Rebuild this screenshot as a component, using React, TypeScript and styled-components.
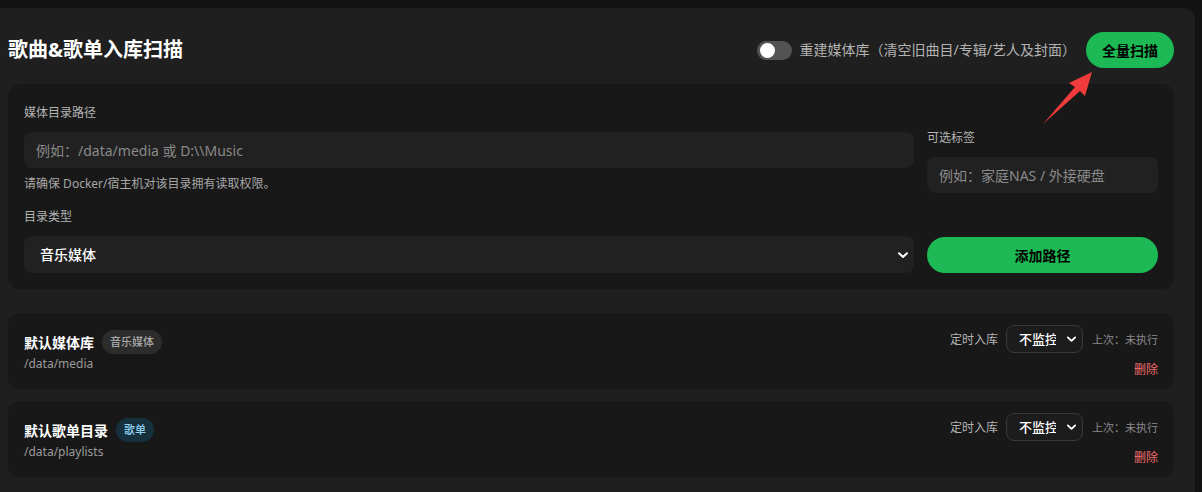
import React from "react";
import styled, { createGlobalStyle } from "styled-components";

const GlobalStyle = createGlobalStyle`
  html, body {
    margin: 0;
    padding: 0;
    background: #121212;
    overflow: hidden;
    color-scheme: dark;
  }
  body {
    font-family: "Noto Sans", "Noto Sans CJK SC", sans-serif;
    color: #fff;
  }
`;

const Panel = styled.section`
  position: relative;
  margin-top: 8px;
  width: 1195px;
  box-sizing: border-box;
  padding: 24px 21px 24px 8px;
  background: #1f1f1f;
  border-top-right-radius: 12px;
`;

const Header = styled.header`
  display: flex;
  align-items: center;
  height: 36px;
`;

const Title = styled.h2`
  margin: 0;
  flex: 1;
  font-size: 20px;
  font-weight: 700;
  line-height: 28px;
  color: #fff;
`;

const ToggleWrap = styled.label`
  display: flex;
  align-items: center;
  gap: 8px;
  margin-right: 10px;
  font-size: 14px;
  color: #b3b3b3;
  line-height: 20px;
`;

const Track = styled.span<{ $on?: boolean }>`
  position: relative;
  width: 35px;
  height: 19px;
  border-radius: 10px;
  background: ${(p) => (p.$on ? "#1db954" : "#535353")};
`;

const Knob = styled.span`
  position: absolute;
  top: 2px;
  left: 3px;
  width: 15px;
  height: 15px;
  border-radius: 50%;
  background: #fff;
`;

const GreenButton = styled.button<{ $wide?: boolean }>`
  height: 36px;
  padding: 0 16px;
  width: ${(p) => (p.$wide ? "100%" : "auto")};
  border: none;
  border-radius: 999px;
  background: #1db954;
  color: #000;
  font-family: inherit;
  font-size: 14px;
  font-weight: 700;
  cursor: pointer;
`;

const FormCard = styled.div`
  margin-top: 16px;
  padding: 20px 16px 16px;
  background: #181818;
  border-radius: 12px;
  display: grid;
  grid-template-columns: 1fr 231px;
  column-gap: 13px;
  row-gap: 15px;
  align-items: end;
`;

const Field = styled.div`
  display: flex;
  flex-direction: column;
`;

const Label = styled.div`
  font-size: 12px;
  line-height: 18px;
  color: #b3b3b3;
  margin-bottom: 10px;
`;

const Input = styled.input`
  height: 36px;
  box-sizing: border-box;
  padding: 0 12px;
  border: none;
  border-radius: 8px;
  background: #212121;
  color: #fff;
  font-family: inherit;
  font-size: 14px;
  outline: none;
  &::placeholder {
    color: #8a8a8a;
  }
`;

const Hint = styled.div`
  margin-top: 7px;
  font-size: 12px;
  line-height: 18px;
  color: #a7a7a7;
`;

const SelectWrap = styled.div`
  position: relative;
  display: flex;
`;

const Select = styled.select<{ $small?: boolean }>`
  appearance: none;
  flex: 1;
  height: ${(p) => (p.$small ? "28px" : "37px")};
  box-sizing: border-box;
  padding: ${(p) => (p.$small ? "0 26px 0 12px" : "0 30px 0 16px")};
  border: ${(p) => (p.$small ? "1px solid #3a3a3a" : "none")};
  border-radius: 8px;
  background: ${(p) => (p.$small ? "#1c1c1c" : "#212121")};
  color: #fff;
  font-family: inherit;
  font-size: ${(p) => (p.$small ? "13px" : "14px")};
  font-weight: 500;
  outline: none;
`;

const Chevron = styled.svg<{ $right: number }>`
  position: absolute;
  right: ${(p) => p.$right}px;
  top: 50%;
  transform: translateY(-50%);
  pointer-events: none;
`;

const List = styled.div`
  margin-top: 24px;
  display: flex;
  flex-direction: column;
  gap: 12px;
`;

const LibCard = styled.div`
  display: flex;
  align-items: center;
  justify-content: space-between;
  padding: 12px 16px;
  height: 76px;
  box-sizing: border-box;
  background: #181818;
  border-radius: 12px;
`;

const LibInfo = styled.div`
  display: flex;
  flex-direction: column;
  gap: 2px;
`;

const NameRow = styled.div`
  display: flex;
  align-items: center;
  gap: 8px;
`;

const Name = styled.span`
  font-size: 14px;
  font-weight: 700;
  color: #fff;
`;

const Badge = styled.span<{ $kind: "media" | "playlist" }>`
  padding: 4px 8px;
  border-radius: 999px;
  font-size: 11px;
  line-height: 16px;
  font-weight: 500;
  background: ${(p) => (p.$kind === "playlist" ? "#17303d" : "#2c2c2c")};
  color: ${(p) => (p.$kind === "playlist" ? "#8fd3f0" : "#a8a8a8")};
`;

const Path = styled.span`
  font-size: 12px;
  line-height: 16px;
  color: #9a9a9a;
`;

const LibActions = styled.div`
  display: flex;
  flex-direction: column;
  align-items: flex-end;
  gap: 9px;
`;

const ScheduleRow = styled.div`
  display: flex;
  align-items: center;
  gap: 8px;
`;

const SmallLabel = styled.span`
  font-size: 12px;
  color: #b3b3b3;
`;

const LastRun = styled.span`
  margin-left: 1px;
  font-size: 11px;
  color: #8a8a8a;
`;

const DeleteLink = styled.button`
  border: none;
  background: none;
  padding: 0;
  font-family: inherit;
  font-size: 12px;
  line-height: 16px;
  color: #f26b6b;
  cursor: pointer;
`;

const Arrow = styled.svg`
  position: absolute;
  left: 1040px;
  top: 62px;
`;

const ChevronIcon: React.FC<{ right: number; size: number }> = ({ right, size }) => (
  <Chevron $right={right} width={size} height={size} viewBox="0 0 12 12">
    <path d="M2 4.2 6 8 10 4.2" fill="none" stroke="#fff" strokeWidth="2" strokeLinecap="round" strokeLinejoin="round" />
  </Chevron>
);

const libraries = [
  { name: "默认媒体库", badge: "音乐媒体", kind: "media" as const, path: "/data/media" },
  { name: "默认歌单目录", badge: "歌单", kind: "playlist" as const, path: "/data/playlists" },
];

const App: React.FC = () => {
  return (
    <>
      <GlobalStyle />
      <Panel>
        <Header>
          <Title>歌曲&amp;歌单入库扫描</Title>
          <ToggleWrap>
            <Track>
              <Knob />
            </Track>
            重建媒体库（清空旧曲目/专辑/艺人及封面）
          </ToggleWrap>
          <GreenButton>全量扫描</GreenButton>
        </Header>

        <Arrow width="56" height="66" viewBox="1040 70 56 66">
          <polygon
            points="1092,72 1069,83 1075,87 1043,124 1080,91 1085,96"
            fill="#f23b3b"
          />
        </Arrow>

        <FormCard>
          <Field>
            <Label>媒体目录路径</Label>
            <Input placeholder="例如：/data/media 或 D:\\Music" />
            <Hint>请确保 Docker/宿主机对该目录拥有读取权限。</Hint>
          </Field>
          <Field>
            <Label>可选标签</Label>
            <Input placeholder="例如：家庭NAS / 外接硬盘" />
          </Field>
          <Field>
            <Label>目录类型</Label>
            <SelectWrap>
              <Select defaultValue="music">
                <option value="music">音乐媒体</option>
                <option value="playlist">歌单</option>
              </Select>
              <ChevronIcon right={5} size={12} />
            </SelectWrap>
          </Field>
          <GreenButton $wide>添加路径</GreenButton>
        </FormCard>

        <List>
          {libraries.map((lib) => (
            <LibCard key={lib.path}>
              <LibInfo>
                <NameRow>
                  <Name>{lib.name}</Name>
                  <Badge $kind={lib.kind}>{lib.badge}</Badge>
                </NameRow>
                <Path>{lib.path}</Path>
              </LibInfo>
              <LibActions>
                <ScheduleRow>
                  <SmallLabel>定时入库</SmallLabel>
                  <SelectWrap>
                    <Select $small defaultValue="off" style={{ width: 77 }}>
                      <option value="off">不监控</option>
                      <option value="daily">每天</option>
                    </Select>
                    <ChevronIcon right={6} size={11} />
                  </SelectWrap>
                  <LastRun>上次：未执行</LastRun>
                </ScheduleRow>
                <DeleteLink>删除</DeleteLink>
              </LibActions>
            </LibCard>
          ))}
        </List>
      </Panel>
    </>
  );
};

export default App;
